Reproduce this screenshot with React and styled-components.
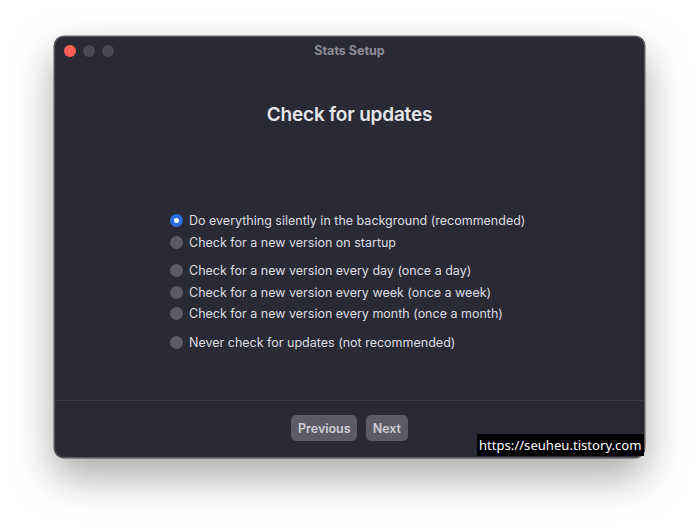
import React from "react";
import styled, { createGlobalStyle } from "styled-components";

const Global = createGlobalStyle`
  html, body { margin: 0; padding: 0; background: #ffffff; }
  body { font-family: Inter, "Noto Sans", "Liberation Sans", sans-serif; -webkit-font-smoothing: antialiased; }
`;

const Stage = styled.div`
  width: 700px;
  height: 530px;
  padding: 36px 0 0 54px;
  box-sizing: border-box;
  position: relative;
`;

const Window = styled.div`
  width: 591px;
  height: 422px;
  box-sizing: border-box;
  background: #2a2a35;
  border: 1px solid #5a5a60;
  border-radius: 10px;
  box-shadow: 0 18px 40px rgba(0, 0, 0, 0.35), 0 0 0 0.5px rgba(0, 0, 0, 0.6);
  display: flex;
  flex-direction: column;
  position: relative;
  overflow: hidden;
`;

const TitleBar = styled.div`
  height: 27px;
  display: flex;
  align-items: center;
  position: relative;
  padding-left: 9px;
  gap: 7px;
`;

const Light = styled.span`
  width: 12px;
  height: 12px;
  border-radius: 50%;
  background: ${(p) => p.$color};
`;

const Title = styled.div`
  position: absolute;
  left: 0;
  right: 0;
  top: 6px;
  text-align: center;
  font-size: 12.5px;
  font-weight: 700;
  color: #8d8c95;
  pointer-events: none;
`;

const Content = styled.div`
  flex: 1;
  display: flex;
  flex-direction: column;
  align-items: center;
`;

const Heading = styled.h1`
  margin: 39px 0 0;
  font-size: 19px;
  font-weight: 600;
  color: #e6e6ea;
  letter-spacing: -0.2px;
`;

const Options = styled.div`
  align-self: flex-start;
  margin: 84px 0 0 115px;
  display: flex;
  flex-direction: column;
  gap: 7px;
`;

const Group = styled.div`
  display: flex;
  flex-direction: column;
`;

const Row = styled.label`
  display: flex;
  align-items: center;
  height: 21.5px;
  gap: 6px;
  font-size: 12.5px;
  color: #dddde0;
`;

const Radio = styled.span`
  width: 13px;
  height: 13px;
  border-radius: 50%;
  box-sizing: border-box;
  background: ${(p) => (p.$checked ? "#2a6fe0" : "#5c5b63")};
  display: flex;
  align-items: center;
  justify-content: center;
  &::after {
    content: "";
    width: 5px;
    height: 5px;
    border-radius: 50%;
    background: #ffffff;
    display: ${(p) => (p.$checked ? "block" : "none")};
  }
`;

const Footer = styled.div`
  height: 57px;
  border-top: 1px solid #3a3a45;
  display: flex;
  justify-content: center;
  align-items: flex-start;
  padding-top: 14px;
  gap: 9px;
  box-sizing: border-box;
`;

const Button = styled.button`
  height: 26px;
  padding: 0 ${(p) => p.$pad}px;
  border: none;
  border-radius: 5px;
  background: #5c5b63;
  color: #cfcfd3;
  font-family: inherit;
  font-size: 12.5px;
  font-weight: 600;
`;

const Watermark = styled.div`
  position: absolute;
  left: 477px;
  top: 434px;
  height: 22px;
  padding: 0 2px 0 2px;
  background: #000000;
  color: #ffffff;
  font-family: "Noto Sans", "Liberation Sans", sans-serif;
  font-size: 13.1px;
  line-height: 22px;
`;

const groups = [
  [
    { label: "Do everything silently in the background (recommended)", checked: true },
    { label: "Check for a new version on startup" },
  ],
  [
    { label: "Check for a new version every day (once a day)" },
    { label: "Check for a new version every week (once a week)" },
    { label: "Check for a new version every month (once a month)" },
  ],
  [{ label: "Never check for updates (not recommended)" }],
];

export default function App() {
  return (
    <Stage>
      <Global />
      <Window>
        <TitleBar>
          <Light $color="#fe5f57" />
          <Light $color="#4b4a52" />
          <Light $color="#4b4a52" />
          <Title>Stats Setup</Title>
        </TitleBar>
        <Content>
          <Heading>Check for updates</Heading>
          <Options>
            {groups.map((g, i) => (
              <Group key={i}>
                {g.map((o) => (
                  <Row key={o.label}>
                    <Radio $checked={o.checked} />
                    {o.label}
                  </Row>
                ))}
              </Group>
            ))}
          </Options>
        </Content>
        <Footer>
          <Button $pad={6.5}>Previous</Button>
          <Button $pad={6.5}>Next</Button>
        </Footer>
      </Window>
      <Watermark>https://seuheu.tistory.com</Watermark>
    </Stage>
  );
}
